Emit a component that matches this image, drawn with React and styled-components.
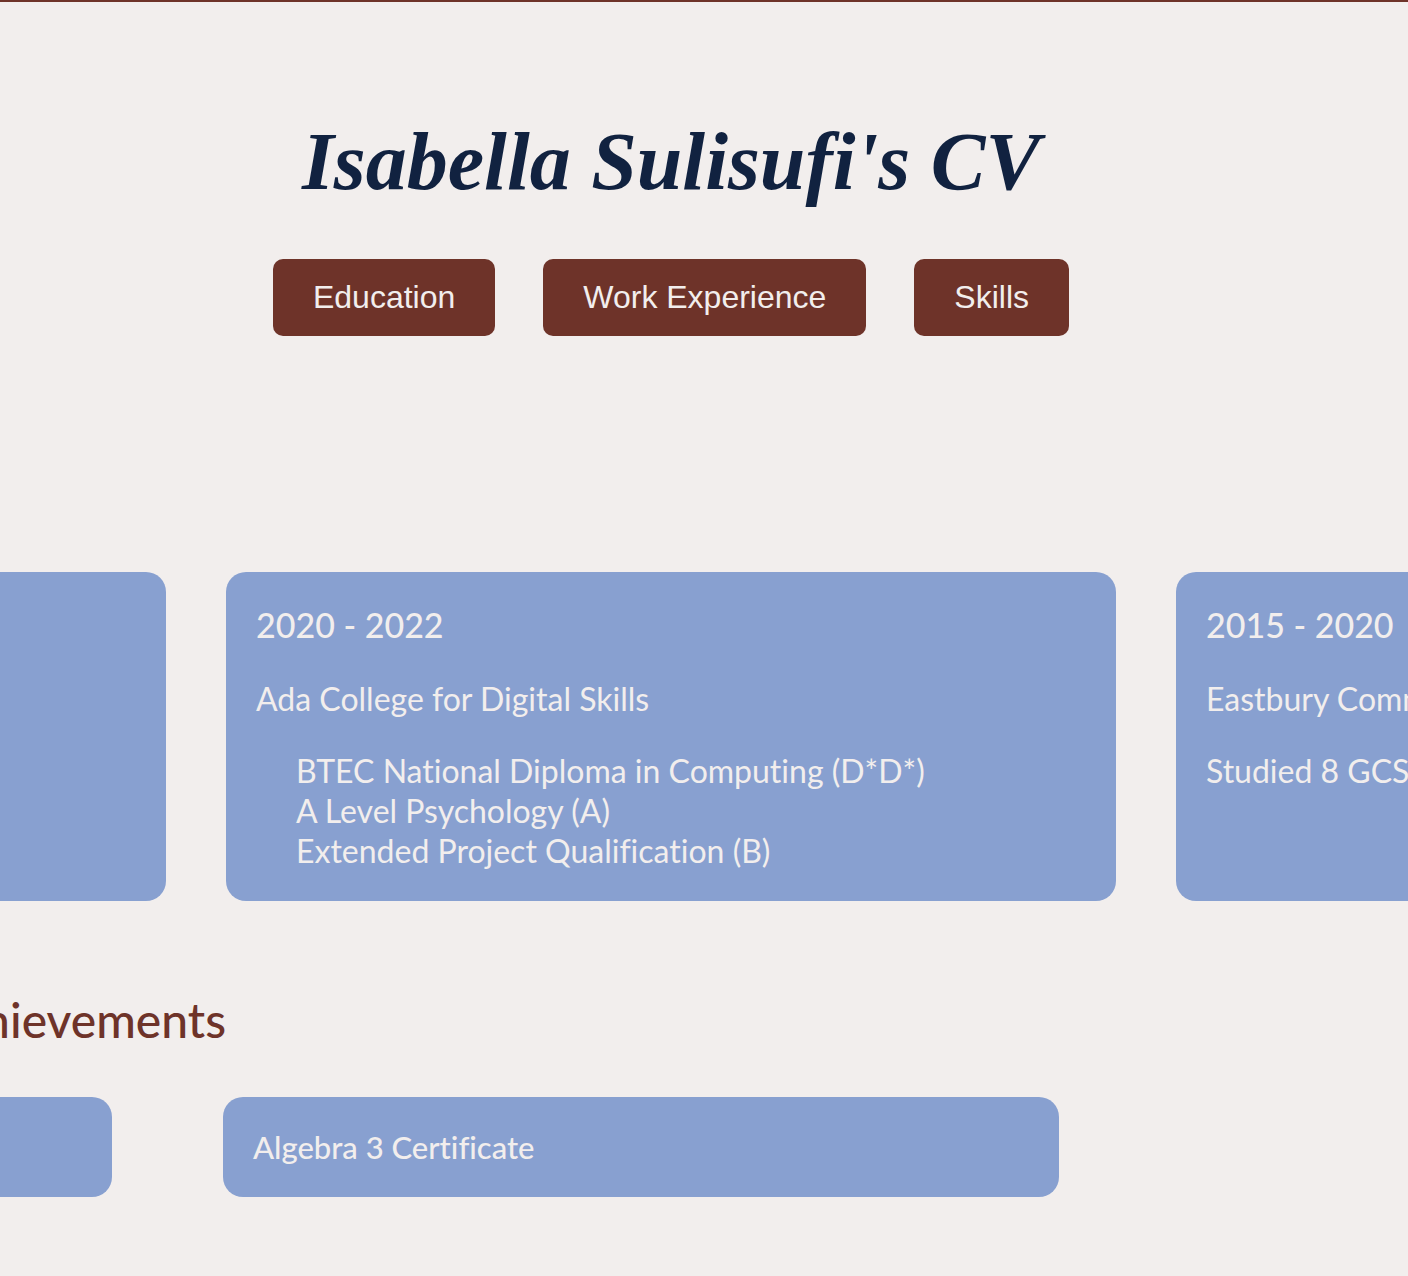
import React from "react";
import styled, { createGlobalStyle } from "styled-components";

const colors = {
  paper: "#f2eeed",
  brick: "#6e3329",
  sky: "#88a0d0",
  navy: "#112240",
};

const GlobalStyle = createGlobalStyle`
  *, *::before, *::after {
    box-sizing: border-box;
  }

  body {
    margin: 0;
    background: ${colors.paper};
    color: ${colors.paper};
    font-family: Lato, "Noto Sans", sans-serif;
    font-size: 32px;
    font-variant-ligatures: none;
    line-height: 40px;
  }
`;

const Page = styled.div`
  min-height: 100vh;
  overflow: hidden;
  border-top: 2px solid ${colors.brick};
  padding: 104px 66px 78px 0;
`;

const Header = styled.header`
  display: flex;
  flex-direction: column;
  align-items: center;
  gap: 41px;
  margin-bottom: 236px;
`;

const Name = styled.h1`
  margin: 0;
  color: ${colors.navy};
  font-family: "Liberation Serif", serif;
  font-size: 82px;
  font-style: italic;
  font-variant-ligatures: normal;
  font-weight: 700;
  line-height: 112px;
  white-space: nowrap;
`;

const Nav = styled.nav`
  display: flex;
  gap: 48px;
`;

const NavButton = styled.button`
  border: 0;
  border-radius: 10px;
  padding: 20px 40px;
  background: ${colors.brick};
  color: ${colors.paper};
  font-family: "Liberation Sans", sans-serif;
  font-size: 32px;
  line-height: 37px;
  cursor: pointer;
`;

const Stage = styled.main`
  display: flex;
  justify-content: center;
`;

const Timeline = styled.div`
  flex: none;
  display: flex;
  flex-direction: column;
`;

const Row = styled.section`
  display: flex;
  gap: ${(p) => p.$gap}px;
`;

const Card = styled.article`
  flex: none;
  display: flex;
  flex-direction: column;
  gap: 32px;
  width: ${(p) => p.$width}px;
  padding: 30px;
  border-radius: 20px;
  background: ${colors.sky};
`;

const Years = styled.h2`
  margin: 0;
  font-size: 34px;
  font-weight: 500;
  line-height: 45px;
`;

const Text = styled.p`
  margin: 0;
`;

const Courses = styled.ul`
  margin: 0;
  padding: 0 0 0 40px;
  list-style: none;
`;

const SectionTitle = styled.h2`
  width: 950px;
  margin: 87px 0 45px;
  color: ${colors.brick};
  font-size: 48px;
  font-weight: 500;
  line-height: 64px;
  text-align: right;
`;

const Award = styled.h3`
  margin: 0;
  font-size: 31px;
  font-weight: 500;
  line-height: 40px;
`;

const pages = ["Education", "Work Experience", "Skills"];

const courses = [
  "BTEC National Diploma in Computing (D*D*)",
  "A Level Psychology (A)",
  "Extended Project Qualification (B)",
];

export default function App() {
  return (
    <>
      <GlobalStyle />
      <Page>
        <Header>
          <Name>Isabella Sulisufi's CV</Name>
          <Nav>
            {pages.map((page) => (
              <NavButton key={page} type="button">
                {page}
              </NavButton>
            ))}
          </Nav>
        </Header>
        <Stage>
          <Timeline>
            <Row $gap={60}>
              <Card $width={890} />
              <Card $width={890}>
                <Years>2020 - 2022</Years>
                <Text>Ada College for Digital Skills</Text>
                <Courses>
                  {courses.map((course) => (
                    <li key={course}>{course}</li>
                  ))}
                </Courses>
              </Card>
              <Card $width={890}>
                <Years>2015 - 2020</Years>
                <Text>Eastbury Community School</Text>
                <Text>Studied 8 GCSEs</Text>
              </Card>
            </Row>
            <SectionTitle>Achievements</SectionTitle>
            <Row $gap={111}>
              <Card $width={836} />
              <Card $width={836}>
                <Award>Algebra 3 Certificate</Award>
              </Card>
            </Row>
          </Timeline>
        </Stage>
      </Page>
    </>
  );
}
